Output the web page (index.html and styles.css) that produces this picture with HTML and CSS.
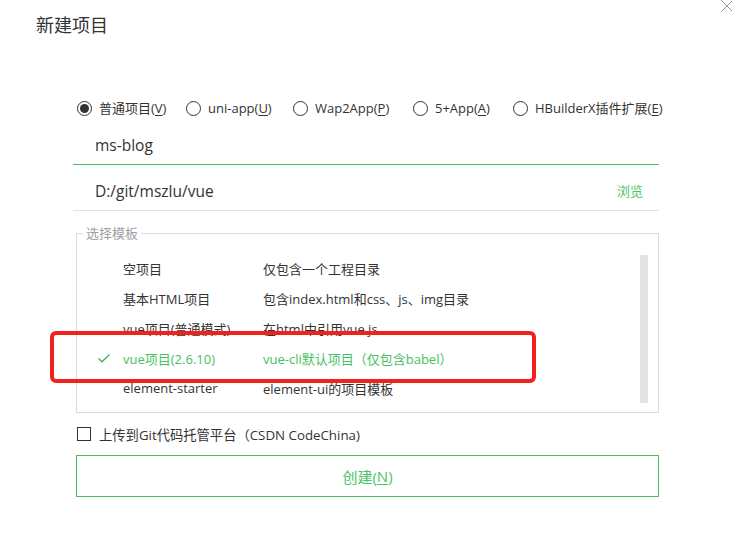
FILE: index.html
```html
<!DOCTYPE html>
<html lang="zh-CN">
<head>
<meta charset="utf-8">
<title>新建项目</title>
<link rel="stylesheet" href="styles.css">
</head>
<body>
<div class="dialog">
  <h1 class="title">新建项目</h1>
  <svg class="close" width="12" height="14" viewBox="0 0 12 14"><path d="M0 1 L12 13 M12 1 L0 13" stroke="#9a9a9a" stroke-width="1" fill="none"/></svg>

  <div class="form">
    <div class="radios">
      <label class="radio checked"><span class="dot"></span><span>普通项目(<u>V</u>)</span></label>
      <label class="radio"><span class="dot"></span><span>uni-app(<u>U</u>)</span></label>
      <label class="radio"><span class="dot"></span><span>Wap2App(<u>P</u>)</span></label>
      <label class="radio"><span class="dot"></span><span>5+App(<u>A</u>)</span></label>
      <label class="radio"><span class="dot"></span><span>HBuilderX插件扩展(<u>E</u>)</span></label>
    </div>

    <div class="field active"><span class="value">ms-blog</span></div>
    <div class="field"><span class="value">D:/git/mszlu/vue</span><span class="browse">浏览</span></div>

    <fieldset class="templates">
      <legend>选择模板</legend>
      <div class="list">
        <div class="rows">
          <div class="row"><span class="mark"></span><span class="c1">空项目</span><span class="c2">仅包含一个工程目录</span></div>
          <div class="row"><span class="mark"></span><span class="c1">基本HTML项目</span><span class="c2">包含index.html和css、js、img目录</span></div>
          <div class="row"><span class="mark"></span><span class="c1">vue项目(普通模式)</span><span class="c2">在html中引用vue.js</span></div>
          <div class="row selected"><span class="mark"><svg width="12" height="9" viewBox="0 0 12 9"><path d="M0.5 4.5 L4 7.8 L11.5 0.5" stroke="#3fae58" stroke-width="1.2" fill="none"/></svg></span><span class="c1">vue项目(2.6.10)</span><span class="c2">vue-cli默认项目（仅包含babel）</span></div>
          <div class="row"><span class="mark"></span><span class="c1">element-starter</span><span class="c2">element-ui的项目模板</span></div>
        </div>
        <div class="scrollbar"></div>
      </div>
    </fieldset>

    <label class="check"><span class="box"></span><span>上传到Git代码托管平台（CSDN CodeChina)</span></label>

    <div class="create">创建(<u>N</u>)</div>
  </div>

  <div class="highlight"></div>
</div>
</body>
</html>
```

FILE: styles.css
```css
* { box-sizing: border-box; }
html, body { margin: 0; padding: 0; background: #fff; }
body {
  font-family: "Open Sans", "Noto Sans CJK SC", sans-serif;
  color: #333;
  width: 732px;
  height: 550px;
  overflow: hidden;
}
.dialog { position: relative; width: 732px; height: 550px; }

.title {
  margin: 0;
  padding: 13px 0 0 36px;
  height: 37px;
  font-size: 18px;
  line-height: 24px;
  font-weight: normal;
  color: #333;
}
.close { position: absolute; left: 721px; top: -1px; }

.form { margin: 62px 73px 0 73px; width: 586px; }

.radios {
  display: grid;
  grid-template-columns: 109px 107px 120px 100px auto;
  padding-left: 4px;
  height: 18px;
  align-items: center;
  font-size: 13px;
}
.radio { display: flex; align-items: center; gap: 7px; white-space: nowrap; line-height: 18px; }
.radio u { text-decoration: underline; text-underline-offset: 2px; }
.dot {
  width: 15px; height: 15px;
  border: 1px solid #333;
  border-radius: 50%;
  display: flex; align-items: center; justify-content: center;
  flex: none;
}
.radio.checked .dot::after {
  content: "";
  width: 9px; height: 9px;
  border-radius: 50%;
  background: #333;
}

.field {
  display: flex;
  align-items: center;
  justify-content: space-between;
  height: 46px;
  padding: 0 16px 0 22px;
  border-bottom: 1px solid #e2e2e2;
  font-size: 15.5px;
}
.field.active { margin-top: 2px; border-bottom-color: #4cbb5c; padding-top: 6px; }
.field + .field { padding-top: 6px; }
.browse { color: #4cc466; font-size: 13px; }

.templates {
  margin: 13px 0 0 3px;
  padding: 0;
  width: 583px;
  border: 1px solid #dcdcdc;
  min-width: 0;
}
.templates legend {
  margin-left: 6px;
  padding: 0 3px;
  font-size: 13px;
  line-height: 18px;
  color: #a0a0a0;
}
.list { display: flex; padding: 11px 10px 9px 0; }
.rows { flex: 1; }
.row { display: flex; align-items: center; height: 30px; font-size: 13px; color: #333; }
.mark { width: 46px; padding-left: 21px; flex: none; display: flex; align-items: center; }
.c1 { width: 140px; flex: none; white-space: nowrap; }
.c2 { white-space: nowrap; }
.row.selected { color: #46c262; }
.scrollbar { width: 8px; margin: 2px 0 0; background: #e4e4e4; }

.check {
  display: flex; align-items: center; gap: 8px;
  height: 20px; margin-top: 11px; padding-left: 4px;
  font-size: 13.3px;
}
.box { width: 14px; height: 14px; border: 1px solid #333; flex: none; }

.create {
  margin: 11px 0 0 3px;
  width: 583px;
  height: 42px;
  border: 1px solid #4cbb5c;
  display: flex; align-items: center; justify-content: center;
  color: #4cc466;
  font-size: 15px;
}
.create u { text-underline-offset: 2px; }

.highlight {
  position: absolute;
  left: 50px; top: 331px;
  width: 486px; height: 52px;
  border: 4px solid #f3211d;
  border-radius: 6px;
}
```
